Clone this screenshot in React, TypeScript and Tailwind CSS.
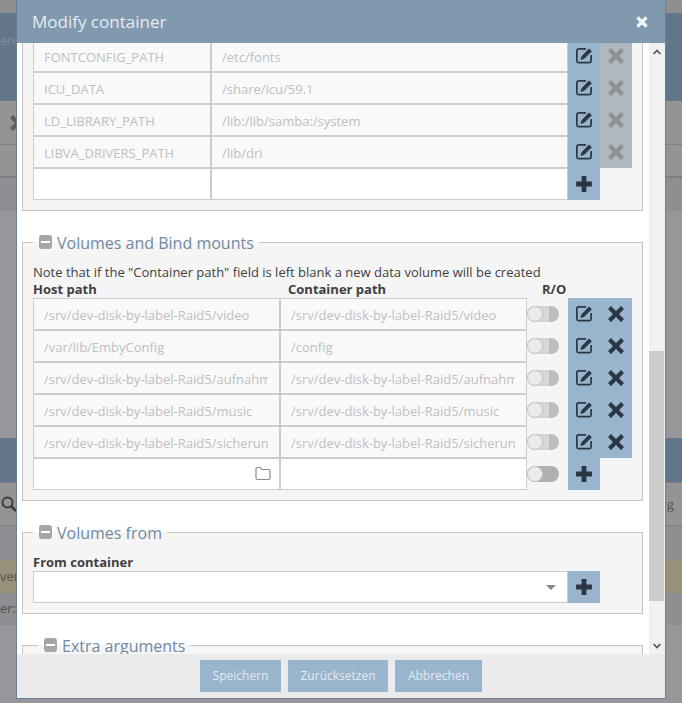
import React from "react";

const envRows = [
  ["FONTCONFIG_PATH", "/etc/fonts"],
  ["ICU_DATA", "/share/icu/59.1"],
  ["LD_LIBRARY_PATH", "/lib:/lib/samba:/system"],
  ["LIBVA_DRIVERS_PATH", "/lib/dri"],
];

const P = "/srv/dev-disk-by-label-Raid5/";
const volumeRows = [
  [P + "video", P + "video"],
  ["/var/lib/EmbyConfig", "/config"],
  [P + "aufnahmen", P + "aufnahmen"],
  [P + "music", P + "music"],
  [P + "sicherungen", P + "sicherungen"],
];

function EditIcon() {
  return (
    <svg width="16" height="16" viewBox="0 0 16 16" fill="none">
      <path d="M10 .9H2.5A1.6 1.6 0 0 0 .9 2.5V13a1.6 1.6 0 0 0 1.6 1.6h11a1.6 1.6 0 0 0 1.6-1.6V7" stroke="currentColor" strokeWidth="1.7" />
      <path d="M13 .6 15.9 3.2 8 11 4.4 12l1-3.6z" fill="currentColor" />
    </svg>
  );
}

function CrossIcon() {
  return (
    <svg width="16" height="16" viewBox="0 0 16 16" fill="currentColor">
      <path d="M3 0 8 5 13 0 16 3 11 8 16 13 13 16 8 11 3 16 0 13 5 8 0 3z" />
    </svg>
  );
}

function PlusIcon() {
  return (
    <svg width="16" height="16" viewBox="0 0 16 16" fill="currentColor">
      <rect x="0" y="5.6" width="16" height="4.8" rx="0.6" />
      <rect x="5.6" y="0" width="4.8" height="16" rx="0.6" />
    </svg>
  );
}

function IconCell({ children, tone = "blue" }: { children: React.ReactNode; tone?: "blue" | "off" }) {
  return (
    <div
      className={`flex h-8 w-8 items-center justify-center ${
        tone === "blue" ? "bg-[#98b5cd] text-[#2b3744]" : "bg-[#afb8c1] text-[#8f9092]"
      }`}
    >
      {children}
    </div>
  );
}

function Field({ value, disabled, className = "" }: { value?: string; disabled?: boolean; className?: string }) {
  return (
    <input
      readOnly
      value={value ?? ""}
      className={`h-8 min-w-0 border border-[#ccc] pl-[10px] pr-[11px] pt-[2px] text-[13px] outline-none ${
        disabled ? "bg-[#f9f9f9] text-[#bfbfbf]" : "bg-white text-[#555]"
      } ${className}`}
    />
  );
}

function Toggle({ disabled }: { disabled?: boolean }) {
  return (
    <div className="flex h-8 w-[41px] items-center">
      <div className={`relative h-4 w-8 rounded-full ${disabled ? "bg-[#bdbdbd]" : "bg-[#b0b0b0]"}`}>
        {disabled && <div className="absolute left-[12px] top-0 h-4 w-[10px] bg-[#d6d6d6]" />}
        <div className="absolute left-0 top-0 h-4 w-4 rounded-full border border-[#c6c6c6] bg-[#ececec]" />
      </div>
    </div>
  );
}

function Group({ title, legendClass = "", className = "", children }: { title: string; legendClass?: string; className?: string; children?: React.ReactNode }) {
  return (
    <fieldset className={`w-[621px] border border-[#c4c4c4] bg-[#f5f5f5] pl-[10px] pr-[10px] ${className}`}>
      <legend className={`flex h-6 items-center pl-[6px] pr-[5px] ${legendClass}`}>
        <span className="flex h-[14px] w-[13px] items-center justify-center rounded-[3px] bg-[#a6a6a6]">
          <span className="h-[2px] w-[9px] bg-white" />
        </span>
        <span className="ml-[5px] pt-[2px] text-[16px] text-[#708aa3]">{title}</span>
      </legend>
      {children}
    </fieldset>
  );
}

function Backdrop() {
  return (
    <div className="flex h-[703px] flex-col bg-[#97979b] text-[13px]">
      <div className="h-[13px] bg-[#8e8e90]" />
      <div className="flex h-[88px] items-center bg-[#63758a] pb-[32px] text-[#7f8d9d]">
        <span>en</span>
      </div>
      <div className="flex h-[44px] items-center border-b border-[#808084] bg-[#949497] pl-[2px]">
        <div className="flex h-[31px] w-[30px] items-center justify-center border border-[#8d8d90] pl-[2px] text-[#5d5d60]">
          <CrossIcon />
        </div>
      </div>
      <div className="h-[33px] border-b-2 border-[#7f7f83] bg-[#949497]" />
      <div className="h-[33px] bg-[#8f8f93]" />
      <div className="h-[227px]" />
      <div className="h-[44px] bg-[#63758a]" />
      <div className="flex h-[44px] items-center justify-between border-y border-[#808084] bg-[#949497] px-[1px] text-[#55555a]">
        <svg width="16" height="16" viewBox="0 0 16 16" fill="none" stroke="#3d3d40" strokeWidth="2">
          <circle cx="6.5" cy="6.5" r="5" />
          <path d="M10 10l5 5" strokeWidth="2.6" />
        </svg>
        <span className="mr-[7px] font-['Liberation_Serif',serif] text-[15px]">g</span>
      </div>
      <div className="h-[34px] bg-[#8f8f93]" />
      <div className="flex h-[33px] items-center bg-[#97917b] text-[#55534a]">
        <span>ver,</span>
      </div>
      <div className="flex h-[32px] items-center bg-[#8f8f93] text-[#4f4f52]">
        <span>er:</span>
      </div>
      <div className="flex-1" />
    </div>
  );
}

export default function App() {
  return (
    <div className="relative h-[703px] w-[682px] overflow-hidden font-['Open_Sans',sans-serif] text-[#3f3f3f]">
      <Backdrop />

      {/* Modal */}
      <div className="absolute left-[16px] top-0 flex h-[699px] w-[650px] flex-col border-x border-b border-[#6d8093] bg-white">
        <div className="flex h-[43px] shrink-0 items-center justify-between bg-[#8199ae] pl-[15px] pr-[17px]">
          <span className="text-[17px] text-[#e6ecf1]">Modify container</span>
          <svg width="12" height="12" viewBox="0 0 12 12" fill="none">
            <path d="M1.5 1.5l9 9M10.5 1.5l-9 9" stroke="#f4f7f9" strokeWidth="3.2" />
          </svg>
        </div>

        <div className="flex min-h-0 flex-1">
          <div className="w-[632px] overflow-hidden pl-[5px]">
            <div className="-mt-[20px] w-[621px] border border-[#c4c4c4] bg-[#f5f5f5] pb-[10px] pl-[10px] pt-[16px]">
              {envRows.map(([k, v]) => (
                <div key={k} className="flex">
                  <Field value={k} disabled className="w-[178px]" />
                  <Field value={v} disabled className="w-[357px]" />
                  <IconCell><EditIcon /></IconCell>
                  <IconCell tone="off"><CrossIcon /></IconCell>
                </div>
              ))}
              <div className="flex">
                <Field className="w-[178px]" />
                <Field className="w-[357px]" />
                <IconCell><PlusIcon /></IconCell>
              </div>
            </div>

            <Group title="Volumes and Bind mounts" className="mt-[19px] pb-[10px]">
              <p className="mt-[10px] h-[16px] text-[13px] leading-[17px]">
                Note that if the "Container path" field is left blank a new data volume will be created
              </p>
              <div className="flex h-[18px] text-[13px] font-bold leading-[18px]">
                <span className="w-[247px] pl-0">Host path</span>
                <span className="w-[262px] pl-[8px]">Container path</span>
                <span>R/O</span>
              </div>
              {volumeRows.map(([h, c]) => (
                <div key={h} className="flex">
                  <Field value={h} disabled className="w-[247px]" />
                  <Field value={c} disabled className="w-[247px]" />
                  <Toggle disabled />
                  <IconCell><EditIcon /></IconCell>
                  <IconCell><CrossIcon /></IconCell>
                </div>
              ))}
              <div className="flex">
                <div className="relative flex w-[247px]">
                  <Field className="w-full" />
                  <svg className="absolute right-[9px] top-[8px]" width="16" height="15" viewBox="0 0 16 15" fill="none" stroke="#8c8c8c" strokeWidth="1.2">
                    <path d="M1 3a1.5 1.5 0 0 1 1.5-1.5h3L7 3.5h6.5A1.5 1.5 0 0 1 15 5v7a1.5 1.5 0 0 1-1.5 1.5h-11A1.5 1.5 0 0 1 1 12z" />
                  </svg>
                </div>
                <Field className="w-[247px]" />
                <Toggle />
                <IconCell><PlusIcon /></IconCell>
              </div>
            </Group>

            <Group title="Volumes from" className="mt-[19px] pb-[10px]">
              <div className="mt-[10px] h-[17px] text-[13px] font-bold leading-[17px]">From container</div>
              <div className="flex">
                <div className="relative flex w-[535px]">
                  <Field className="w-full" />
                  <span className="absolute right-[12px] top-[14px] h-0 w-0 border-x-[5px] border-t-[5px] border-x-transparent border-t-[#888]" />
                </div>
                <IconCell><PlusIcon /></IconCell>
              </div>
            </Group>

            <Group title="Extra arguments" className="mt-[19px] h-[60px]" legendClass="ml-[5px]" />
          </div>

          {/* Scrollbar */}
          <div className="flex w-[16px] shrink-0 flex-col bg-[#f1f1f1] text-[#555]">
            <div className="flex h-[308px] items-start justify-center pt-[6px]">
              <svg width="8" height="6" viewBox="0 0 8 6" fill="none" stroke="currentColor" strokeWidth="1.7">
                <path d="M.6 5 4 1.4 7.4 5" />
              </svg>
            </div>
            <div className="h-[250px] w-[15px] bg-[#cbcbcb]" />
            <div className="flex flex-1 items-end justify-center pb-[5px]">
              <svg width="8" height="6" viewBox="0 0 8 6" fill="none" stroke="currentColor" strokeWidth="1.7">
                <path d="M.6 1 4 4.6 7.4 1" />
              </svg>
            </div>
          </div>
        </div>

        <div className="flex h-[44px] shrink-0 items-center justify-center gap-[7px] bg-[#ebebeb] text-[12px] text-[#e3eaf0]">
          <div className="flex h-8 w-[81px] items-center justify-center bg-[#98b5cd]">Speichern</div>
          <div className="flex h-8 w-[100px] items-center justify-center bg-[#98b5cd]">Zurücksetzen</div>
          <div className="flex h-8 w-[87px] items-center justify-center bg-[#98b5cd]">Abbrechen</div>
        </div>
      </div>
    </div>
  );
}
